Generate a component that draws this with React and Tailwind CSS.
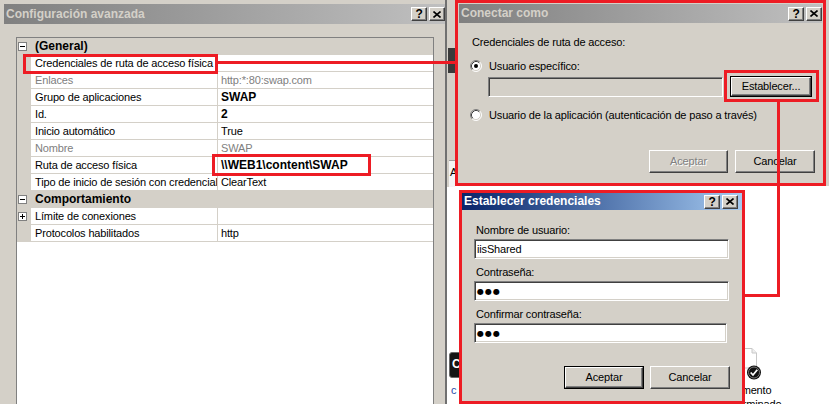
import React from 'react';

const RED = 'bg-[#ed1c24]';

const HelpGlyph = () => <span className="font-bold text-[12px] leading-none text-black">?</span>;

const CloseGlyph = () => (
  <svg width="8" height="7" viewBox="0 0 8 7">
    <path d="M0.5 0.5 L7.5 6.5 M7.5 0.5 L0.5 6.5" stroke="#000" strokeWidth="1.6" />
  </svg>
);

function CaptionButton({ children }) {
  return (
    <div className="w-[16px] h-[14px] bg-[#d4d0c8] border border-t-white border-l-white border-r-[#404040] border-b-[#404040] shadow-[inset_-1px_-1px_0_#808080] flex items-center justify-center">
      {children}
    </div>
  );
}

function TitleBar({ title, active, className = '' }) {
  const tone = active
    ? 'bg-linear-to-r from-[#0a246a] to-[#a6caf0] text-white'
    : 'bg-linear-to-r from-[#808080] to-[#c0c0c0] text-[#d4d0c8]';
  return (
    <div className={`flex items-center justify-between pl-[2px] ${tone} ${className}`}>
      <span className="font-bold text-[12px] tracking-normal">{title}</span>
      <div className="flex gap-[2px]">
        <CaptionButton>
          <HelpGlyph />
        </CaptionButton>
        <CaptionButton>
          <CloseGlyph />
        </CaptionButton>
      </div>
    </div>
  );
}

function Button({ children, isDefault, disabled, className = '' }) {
  return (
    <div className={`${isDefault ? 'border border-black' : ''} ${className}`}>
      <div className="h-full w-full bg-[#d4d0c8] border border-t-white border-l-white border-r-[#404040] border-b-[#404040] shadow-[inset_-1px_-1px_0_#808080] flex items-center justify-center">
        <span className={disabled ? 'text-[#808080] [text-shadow:1px_1px_0_#fff]' : ''}>{children}</span>
      </div>
    </div>
  );
}

function Field({ children, disabled, className = '' }) {
  return (
    <div
      className={`border border-t-[#808080] border-l-[#808080] border-r-white border-b-white shadow-[inset_1px_1px_0_#404040,inset_-1px_-1px_0_#d4d0c8] flex items-center pl-[2px] ${
        disabled ? 'bg-[#d4d0c8]' : 'bg-white'
      } ${className}`}
    >
      {children}
    </div>
  );
}

const Dots = () => (
  <span className="font-['DejaVu_Sans',sans-serif] text-[8px] tracking-[1px]">●●●</span>
);

function Radio({ checked }) {
  return (
    <svg width="12" height="12" viewBox="0 0 12 12" className="shrink-0">
      <circle cx="6" cy="6" r="5" fill="#fff" />
      <path d="M2.11 9.89 A5.5 5.5 0 0 1 9.89 2.11" stroke="#808080" fill="none" />
      <path d="M9.89 2.11 A5.5 5.5 0 0 1 2.11 9.89" stroke="#fff" fill="none" />
      <path d="M2.82 9.18 A4.5 4.5 0 0 1 9.18 2.82" stroke="#404040" fill="none" />
      <path d="M9.18 2.82 A4.5 4.5 0 0 1 2.82 9.18" stroke="#d4d0c8" fill="none" />
      {checked && <circle cx="6" cy="6" r="2" fill="#000" />}
    </svg>
  );
}

function ExpandBox({ open }) {
  return (
    <svg width="9" height="9" viewBox="0 0 9 9">
      <rect x="0.5" y="0.5" width="8" height="8" fill="#fff" stroke="#808080" />
      <path d="M2 4.5 H7" stroke="#000" />
      {!open && <path d="M4.5 2 V7" stroke="#000" />}
    </svg>
  );
}

function Category({ label }) {
  return (
    <div className="flex h-[17px] items-center bg-[#d4d0c8]">
      <div className="w-[14px] pl-[1px] flex items-center">
        <ExpandBox open />
      </div>
      <span className="pl-[4px] font-bold text-[12px] tracking-normal">{label}</span>
    </div>
  );
}

function Row({ name, value, gray, bold, plus }) {
  const valueTone = gray ? 'text-[#808080]' : bold ? 'font-bold text-[12px] tracking-normal' : '';
  return (
    <div className="flex h-[17px]">
      <div className="w-[14px] bg-[#d4d0c8] pl-[1px] flex items-center">{plus && <ExpandBox />}</div>
      <div
        className={`w-[187px] bg-white border-r border-b border-[#d4d0c8] pl-[4px] flex items-center overflow-hidden whitespace-nowrap ${
          gray ? 'text-[#808080]' : ''
        }`}
      >
        {name}
      </div>
      <div className={`flex-1 bg-white border-b border-[#d4d0c8] pl-[3px] flex items-center whitespace-nowrap ${valueTone}`}>
        {value}
      </div>
    </div>
  );
}

const generalRows = [
  { name: 'Credenciales de ruta de acceso física', value: '' },
  { name: 'Enlaces', value: 'http:*:80:swap.com', gray: true },
  { name: 'Grupo de aplicaciones', value: 'SWAP', bold: true },
  { name: 'Id.', value: '2', bold: true },
  { name: 'Inicio automático', value: 'True' },
  { name: 'Nombre', value: 'SWAP', gray: true },
  { name: 'Ruta de acceso física', value: '\\\\WEB1\\content\\SWAP', bold: true },
  { name: 'Tipo de inicio de sesión con credenciales', value: 'ClearText' },
];

export default function App() {
  return (
    <div className="relative w-[829px] h-[404px] overflow-hidden bg-white flex font-['Liberation_Sans',Arial,sans-serif] text-[11px] leading-[13px] tracking-[-0.15px] text-black">
      {/* Configuración avanzada */}
      <div className="w-[447px] h-[404px] shrink-0 bg-[#d4d0c8] border-r-2 border-r-[#707070] pl-[4px] pt-[4px] flex flex-col">
        <TitleBar title="Configuración avanzada" className="h-[20px]" />
        <div className="mt-[13px] ml-[12px] mr-[11px] flex-1 bg-white border-t border-l border-r border-[#808080] flex flex-col">
          <Category label="(General)" />
          {generalRows.map((r) => (
            <Row key={r.name} {...r} />
          ))}
          <Category label="Comportamiento" />
          <Row name="Límite de conexiones" value="" plus />
          <Row name="Protocolos habilitados" value="http" />
        </div>
      </div>

      {/* window behind, between the dialogs */}
      <div className="absolute left-[447px] top-0 w-[8px] h-[187px] bg-[#d4d0c8] flex flex-col">
        <div className="mt-[48px] ml-[1px] h-[25px] bg-[#3a3a3a]" />
        <div className="mt-[87px] ml-[2px] h-[27px] bg-[#f4f4f4] border-t border-[#a0a0a0] pl-[1px] pt-[5px]">A</div>
      </div>
      <div className="absolute left-[449px] top-[352px] w-[14px] h-[26px] rounded-l-[3px] bg-[#161616] border border-[#6a6a6a] text-white font-bold text-[12px] pl-[2px] pt-[5px]">
        C
      </div>
      <div className="absolute left-[451px] top-[384px] text-[#2848a8]">c</div>
      <div className="absolute left-[826px] top-0 w-[3px] h-[186px] bg-[#d4d0c8]" />

      {/* Documento predeterminado icon */}
      <svg className="absolute left-[742px] top-[346px]" width="24" height="36" viewBox="0 0 24 36">
        <path d="M1 2.5 H10 L14.5 7 V22 H1 Z" fill="#fff" stroke="#c8c8c8" />
        <path d="M10 2.5 V7 H14.5" fill="#eee" stroke="#c8c8c8" />
        <circle cx="12" cy="26.5" r="7" fill="#111" />
        <circle cx="12" cy="26.5" r="5.5" fill="none" stroke="#7a7a7a" />
        <path d="M8.7 26.5 L11 29 L15.3 23.8" stroke="#fff" strokeWidth="1.8" fill="none" />
      </svg>
      <div className="absolute left-[694px] top-[383px] w-[100px] text-center leading-[14px]">
        <div>Documento</div>
        <div>predeterminado</div>
      </div>

      {/* Conectar como */}
      <div className="absolute left-[455px] top-0 w-[371px] h-[186px] border-[3px] border-[#ed1c24] bg-[#d4d0c8] p-[1px] flex flex-col">
        <TitleBar title="Conectar como" className="h-[19px]" />
        <div className="pl-[11px] pr-[7px] flex flex-col">
          <div className="mt-[13px] ml-[2px]">Credenciales de ruta de acceso:</div>
          <div className="mt-[11px] h-[12px] flex items-center gap-[7px]">
            <Radio checked />
            <span>Usuario específico:</span>
          </div>
          <div className="mt-[4px] ml-[18px] flex items-start gap-[7px]">
            <Field disabled className="mt-[1px] w-[235px] h-[20px]" />
            <Button isDefault className="w-[82px] h-[21px]">
              Establecer...
            </Button>
          </div>
          <div className="mt-[12px] h-[12px] flex items-center gap-[7px]">
            <Radio />
            <span>Usuario de la aplicación (autenticación de paso a través)</span>
          </div>
          <div className="mt-[29px] flex justify-end gap-[7px]">
            <Button disabled className="w-[79px] h-[23px]">
              Aceptar
            </Button>
            <Button className="w-[80px] h-[23px]">Cancelar</Button>
          </div>
        </div>
      </div>

      {/* Establecer credenciales */}
      <div className="absolute left-[459px] top-[190px] w-[286px] h-[214px] border-[3px] border-[#ed1c24] bg-[#d4d0c8] flex flex-col">
        <TitleBar active title="Establecer credenciales" className="h-[17px] pr-[4px]" />
        <div className="pl-[12px] flex flex-col">
          <div className="mt-[14px] ml-[2px]">Nombre de usuario:</div>
          <Field className="mt-[2px] w-[255px] h-[20px]">iisShared</Field>
          <div className="mt-[7px] ml-[2px]">Contraseña:</div>
          <Field className="mt-[2px] w-[255px] h-[20px]">
            <Dots />
          </Field>
          <div className="mt-[7px] ml-[2px]">Confirmar contraseña:</div>
          <Field className="mt-[2px] w-[253px] h-[20px]">
            <Dots />
          </Field>
          <div className="mt-[23px] pr-[12px] flex justify-end gap-[6px]">
            <Button isDefault className="w-[80px] h-[23px]">
              Aceptar
            </Button>
            <Button className="w-[80px] h-[23px]">Cancelar</Button>
          </div>
        </div>
      </div>

      {/* annotation boxes and connectors */}
      <div className="absolute left-[23px] top-[54px] w-[195px] h-[20px] border-[3px] border-[#ed1c24]" />
      <div className={`absolute left-[218px] top-[61px] w-[237px] h-[3px] ${RED}`} />
      <div className="absolute left-[212px] top-[154px] w-[159px] h-[22px] border-[3px] border-[#ed1c24]" />
      <div className="absolute left-[724px] top-[70px] w-[95px] h-[32px] border-[3px] border-[#ed1c24]" />
      <div className={`absolute left-[777px] top-[102px] w-[3px] h-[195px] ${RED}`} />
      <div className={`absolute left-[745px] top-[294px] w-[35px] h-[3px] ${RED}`} />
    </div>
  );
}
